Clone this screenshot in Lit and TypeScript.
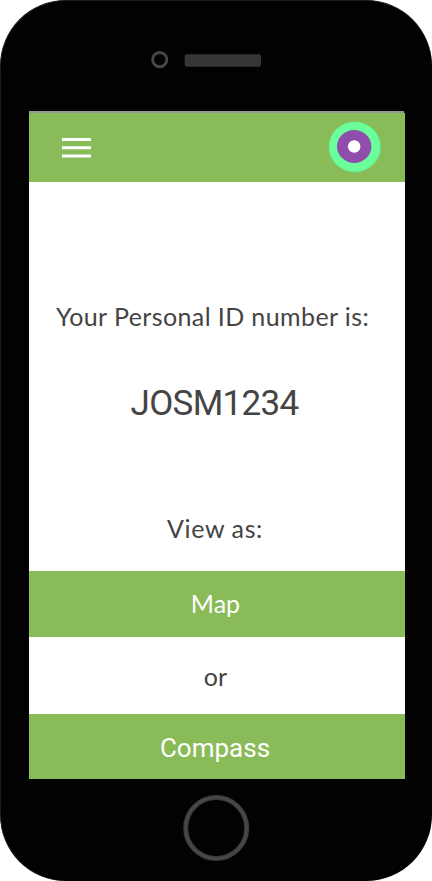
import { LitElement, html, css } from "lit";
import { customElement } from "lit/decorators.js";

@customElement("app-root")
export class AppRoot extends LitElement {
  static styles = css`
    :host {
      display: block;
      width: 432px;
      height: 881px;
      background: #fff;
    }
    .phone {
      box-sizing: border-box;
      width: 432px;
      height: 881px;
      padding: 0 27px 0 28px;
      background: #020202;
      border: 1px solid #1c1c1c;
      border-right-width: 0;
      border-bottom-width: 0;
      border-radius: 66px;
      display: flex;
      flex-direction: column;
      overflow: hidden;
    }
    .top { height: 110px; flex: none; }
    .bottom { height: 102px; flex: none; }
    .top svg, .bottom svg, .bar svg { display: block; }
    .screen {
      width: 376px;
      height: 668px;
      background: #fff;
      display: flex;
      flex-direction: column;
    }
    .edge { height: 2px; background: #969396; flex: none; margin-right: 1px; box-shadow: 1px 0 #020202; }
    .bar {
      height: 69px;
      flex: none;
      background: #8abb59;
      display: flex;
      justify-content: space-between;
      padding: 0 22px 0 31px;
    }
    .line {
      height: 40px;
      line-height: 40px;
      flex: none;
      text-align: center;
      white-space: nowrap;
      color: #444;
      font-family: Lato, sans-serif;
      font-size: 25px;
    }
    .intro { margin-top: 114px; padding-right: 9px; letter-spacing: 0.4px; }
    .code {
      margin-top: 48px;
      padding-right: 5px;
      font-family: Roboto, sans-serif;
      font-size: 35px;
      letter-spacing: -0.7px;
    }
    .view { margin-top: 84px; padding-right: 4px; letter-spacing: 0.6px; }
    .or { height: 77px; line-height: 79px; padding-right: 3px; }
    .button {
      display: block;
      border: 0;
      padding: 0 3px 0 0;
      width: 100%;
      height: 66px;
      line-height: 64px;
      background: #8abb59;
      color: #fff;
    }
    .map { margin-top: 23px; padding-bottom: 2px; }
    .compass {
      height: 65px;
      padding: 2px 4px 0 0;
      font-family: Roboto, sans-serif;
      font-size: 26px;
      letter-spacing: 0;
    }
  `;

  render() {
    return html`
      <div class="phone">
        <div class="top">
          <svg width="376" height="110" viewBox="29 1 376 110">
            <circle cx="159.7" cy="59.6" r="7.1" fill="none" stroke="#464646" stroke-width="2.9" />
            <rect x="184.7" y="54.3" width="76.3" height="12.4" rx="2" fill="#363636" />
          </svg>
        </div>
        <div class="screen">
          <div class="edge"></div>
          <div class="bar">
            <svg width="34" height="69" viewBox="60 113 34 69">
              <path d="M62 139.5H91M62 147.7H91M62 155.9H91" stroke="#fff" stroke-width="3" />
            </svg>
            <svg width="56" height="69" viewBox="327 113 56 69">
              <ellipse cx="354.9" cy="147" rx="26.2" ry="25.5" fill="#69e884" />
              <ellipse cx="354.5" cy="146.7" rx="25.3" ry="24.7" fill="#6bff9b" />
              <ellipse cx="354.2" cy="146.4" rx="17.2" ry="16.5" fill="#8f4eab" />
              <circle cx="354.2" cy="146.5" r="6.2" fill="#fff" />
            </svg>
          </div>
          <div class="line intro">Your Personal ID number is:</div>
          <div class="line code">JOSM1234</div>
          <div class="line view">View as:</div>
          <button class="line button map">Map</button>
          <div class="line or">or</div>
          <button class="line button compass">Compass</button>
        </div>
        <div class="bottom">
          <svg width="376" height="102" viewBox="29 779 376 102">
            <circle cx="216.2" cy="828" r="30.5" fill="none" stroke="#3b3b3b" stroke-width="5" />
            <circle cx="216.2" cy="828" r="30.5" fill="none" stroke="#484848" stroke-width="2.6" />
          </svg>
        </div>
      </div>
    `;
  }
}
